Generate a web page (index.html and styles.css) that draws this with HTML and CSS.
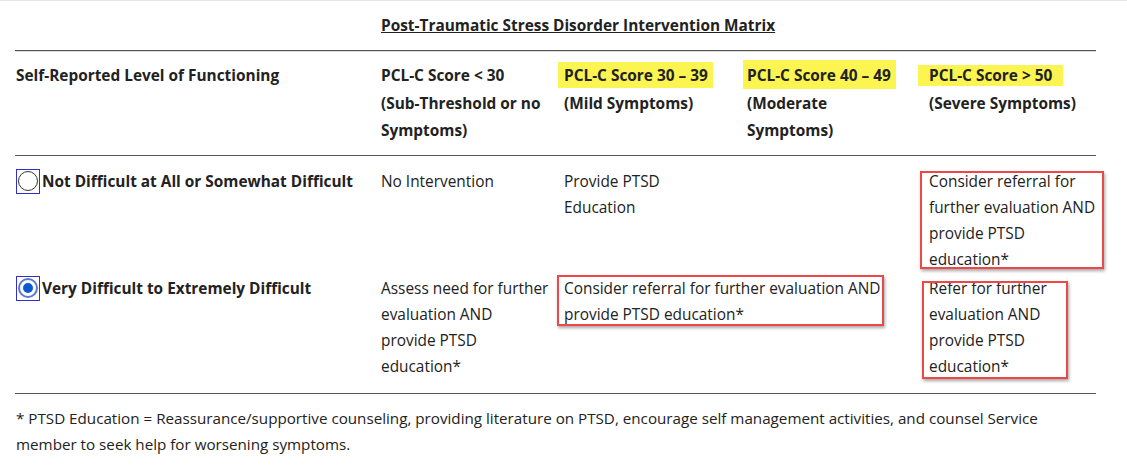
FILE: index.html
```html
<!DOCTYPE html>
<html lang="en">
<head>
<meta charset="utf-8">
<title>PTSD Intervention Matrix</title>
<link rel="stylesheet" href="styles.css">
</head>
<body>
<div class="page">
  <div class="title-row">
    <h1 class="title">Post-Traumatic Stress Disorder Intervention Matrix</h1>
  </div>
  <div class="matrix">
    <div class="row head">
      <div class="cell first">Self-Reported Level of Functioning</div>
      <div class="cell"><span class="hl">PCL-C Score &lt; 30</span><br>(Sub-Threshold or no Symptoms)</div>
      <div class="cell"><span class="hl mild">PCL-C Score 30 – 39</span><br>(Mild Symptoms)</div>
      <div class="cell"><span class="hl moderate">PCL-C Score 40 – 49</span><br>(Moderate Symptoms)</div>
      <div class="cell"><span class="hl severe">PCL-C Score &gt; 50</span><br>(Severe Symptoms)</div>
    </div>
    <div class="row body-row r1">
      <div class="cell first option">
        <span class="radio-frame"><span class="radio"></span></span>
        <span class="label">Not Difficult at All or Somewhat Difficult</span>
      </div>
      <div class="cell">No Intervention</div>
      <div class="cell">Provide PTSD Education</div>
      <div class="cell"></div>
      <div class="cell"><div class="annot a1">Consider referral for further evaluation AND provide PTSD education*</div></div>
    </div>
    <div class="row body-row r2">
      <div class="cell first option">
        <span class="radio-frame"><span class="radio checked"></span></span>
        <span class="label">Very Difficult to Extremely Difficult</span>
      </div>
      <div class="cell">Assess need for further evaluation AND provide PTSD education*</div>
      <div class="cell span2"><div class="annot a2">Consider referral for further evaluation AND provide PTSD education*</div></div>
      <div class="cell"><div class="annot a3">Refer for further evaluation AND provide PTSD education*</div></div>
    </div>
  </div>
  <p class="footnote">* PTSD Education = Reassurance/supportive counseling, providing literature on PTSD, encourage self management activities, and counsel Service member to seek help for worsening symptoms.</p>
</div>
</body>
</html>
```
FILE: styles.css
```css
html, body {
  margin: 0;
  padding: 0;
  background: #fff;
}
body {
  border-top: 1px solid #e6e6e6;
  font-family: "Open Sans", "Noto Sans", sans-serif;
  font-size: 15.4px;
  color: #222;
}
.page {
  margin-left: 15px;
  width: 1081px;
}
.title-row {
  display: grid;
  grid-template-columns: 366px 1fr;
  padding: 12px 0 11px;
}
.title {
  grid-column: 2;
  margin: 0;
  font-size: 15.4px;
  line-height: 26px;
  font-weight: 700;
  text-decoration: underline;
}
.matrix {
  border-top: 1px solid #555;
  box-shadow: inset 0 1px 0 #ddd;
}
.row {
  display: grid;
  grid-template-columns: 366px 183px 183px 182px 167px;
}
.cell {
  padding-right: 15px;
  min-width: 0;
}
.cell.first {
  padding-left: 1px;
}
.head {
  font-weight: 700;
  line-height: 27.5px;
  padding: 11px 0 10px;
  border-bottom: 1px solid #555;
}
.mild {
  background: #fbf451;
  padding: 3px 5px 2px 6px;
  margin-left: -6px;
}
.moderate {
  background: #fbf451;
  padding: 5px 5px 3px 4px;
  margin-left: -4px;
}
.severe {
  background: #fbf451;
  padding: 0 11px 0 11px;
  margin-left: -11px;
}
.body-row {
  line-height: 26px;
}
.r1 {
  padding-top: 13px;
}
.r2 {
  padding: 3px 0 13px;
  border-bottom: 1px solid #555;
}
.option {
  display: flex;
  align-items: flex-start;
  gap: 2px;
  font-weight: 700;
}
.radio-frame {
  flex: none;
  width: 22px;
  height: 23px;
  border: 1px solid #3030d0;
  display: flex;
  align-items: center;
  justify-content: center;
}
.radio {
  box-sizing: border-box;
  width: 20px;
  height: 20px;
  border: 1px solid #333;
  border-radius: 50%;
  background: #fff;
  display: flex;
  align-items: center;
  justify-content: center;
}
.radio.checked {
  border: 2px solid #5b78d4;
}
.radio.checked::after {
  content: "";
  width: 10px;
  height: 10px;
  border-radius: 50%;
  background: #0a5bd0;
}
.span2 {
  grid-column: span 2;
}
.annot {
  position: relative;
}
.annot::after {
  content: "";
  position: absolute;
  border: 2px solid #ef4747;
  box-shadow: 1px 2px 3px rgba(0, 0, 0, 0.35);
  pointer-events: none;
}
.a1 {
  width: 172px;
}
.a1::after {
  left: -9px;
  right: -3px;
  top: 2px;
  bottom: 4px;
}
.a2 {
  width: 322px;
}
.a2::after {
  left: -7px;
  right: 2px;
  top: -1px;
  bottom: 2px;
}
.a3 {
  width: 137px;
}
.a3::after {
  left: -7px;
  right: -2px;
  top: 5px;
  bottom: 1px;
}
.footnote {
  margin: 0;
  padding-top: 11px;
  padding-left: 1px;
  font-size: 15.2px;
  line-height: 26px;
}
```
